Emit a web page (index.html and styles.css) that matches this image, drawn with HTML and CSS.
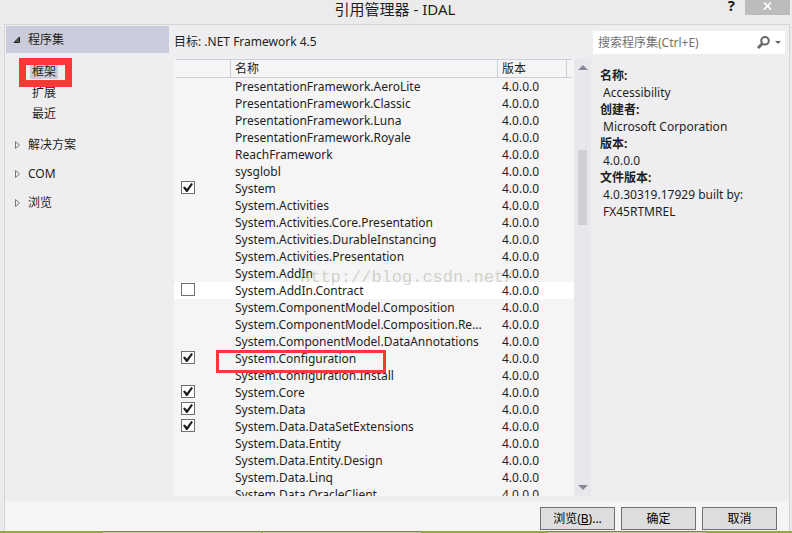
FILE: index.html
```html
<!DOCTYPE html>
<html lang="zh-CN">
<head>
    <meta charset="utf-8">
    <title>引用管理器 - IDAL</title>
    <link rel="stylesheet" href="styles.css">
</head>
<body>
    <div class="window">
        <header class="titlebar">
            <h1>引用管理器 - IDAL</h1>
            <div class="window-buttons">
                <button class="help" type="button">?</button>
                <button class="close" type="button" aria-label="关闭">
                    <svg width="9" height="8" viewBox="0 0 9 8"><path d="M1 0.5L8 7.5M8 0.5L1 7.5" stroke="#fff" stroke-width="1.7"/></svg>
                </button>
            </div>
        </header>

        <div class="dialog">
            <main class="content">
                <nav class="sidebar">
                    <a class="group active" href="#">
                        <svg width="8" height="8" viewBox="0 0 8 8"><path d="M6.5 1V6.5H1Z" fill="#555" stroke="#222"/></svg>
                        程序集
                    </a>
                    <div class="children">
                        <a class="selected marked" href="#"><span>框架</span></a>
                        <a href="#">扩展</a>
                        <a href="#">最近</a>
                    </div>
                    <a class="group" href="#">
                        <svg width="8" height="8" viewBox="0 0 8 8"><path d="M2.5 0.5V7.5L6.5 4Z" fill="none" stroke="#777"/></svg>
                        解决方案
                    </a>
                    <a class="group" href="#">
                        <svg width="8" height="8" viewBox="0 0 8 8"><path d="M2.5 0.5V7.5L6.5 4Z" fill="none" stroke="#777"/></svg>
                        COM
                    </a>
                    <a class="group" href="#">
                        <svg width="8" height="8" viewBox="0 0 8 8"><path d="M2.5 0.5V7.5L6.5 4Z" fill="none" stroke="#777"/></svg>
                        浏览
                    </a>
                </nav>

                <section class="assemblies">
                    <p class="target">目标: .NET Framework 4.5</p>
                    <div class="list">
                        <div class="list-view">
                            <table>
                                <colgroup>
                                    <col class="col-check">
                                    <col class="col-name">
                                    <col class="col-version">
                                    <col>
                                </colgroup>
                                <thead>
                                    <tr><th></th><th>名称</th><th>版本</th><th></th></tr>
                                </thead>
                                <tbody>
                                    <tr><td></td><td>PresentationFramework.AeroLite</td><td>4.0.0.0</td><td></td></tr>
                                    <tr><td></td><td>PresentationFramework.Classic</td><td>4.0.0.0</td><td></td></tr>
                                    <tr><td></td><td>PresentationFramework.Luna</td><td>4.0.0.0</td><td></td></tr>
                                    <tr><td></td><td>PresentationFramework.Royale</td><td>4.0.0.0</td><td></td></tr>
                                    <tr><td></td><td>ReachFramework</td><td>4.0.0.0</td><td></td></tr>
                                    <tr><td></td><td>sysglobl</td><td>4.0.0.0</td><td></td></tr>
                                    <tr><td><input type="checkbox" id="system" checked></td><td><label for="system">System</label></td><td>4.0.0.0</td><td></td></tr>
                                    <tr><td></td><td>System.Activities</td><td>4.0.0.0</td><td></td></tr>
                                    <tr><td></td><td>System.Activities.Core.Presentation</td><td>4.0.0.0</td><td></td></tr>
                                    <tr><td></td><td>System.Activities.DurableInstancing</td><td>4.0.0.0</td><td></td></tr>
                                    <tr><td></td><td>System.Activities.Presentation</td><td>4.0.0.0</td><td></td></tr>
                                    <tr><td></td><td>System.AddIn</td><td>4.0.0.0</td><td></td></tr>
                                    <tr class="hover"><td><input type="checkbox" id="contract"></td><td><label for="contract">System.AddIn.Contract</label></td><td>4.0.0.0</td><td></td></tr>
                                    <tr><td></td><td>System.ComponentModel.Composition</td><td>4.0.0.0</td><td></td></tr>
                                    <tr><td></td><td>System.ComponentModel.Composition.Re...</td><td>4.0.0.0</td><td></td></tr>
                                    <tr><td></td><td>System.ComponentModel.DataAnnotations</td><td>4.0.0.0</td><td></td></tr>
                                    <tr><td><input type="checkbox" id="configuration" checked></td><td class="marked"><label for="configuration">System.Configuration</label></td><td>4.0.0.0</td><td></td></tr>
                                    <tr><td></td><td>System.Configuration.Install</td><td>4.0.0.0</td><td></td></tr>
                                    <tr><td><input type="checkbox" id="core" checked></td><td><label for="core">System.Core</label></td><td>4.0.0.0</td><td></td></tr>
                                    <tr><td><input type="checkbox" id="data" checked></td><td><label for="data">System.Data</label></td><td>4.0.0.0</td><td></td></tr>
                                    <tr><td><input type="checkbox" id="extensions" checked></td><td><label for="extensions">System.Data.DataSetExtensions</label></td><td>4.0.0.0</td><td></td></tr>
                                    <tr><td></td><td>System.Data.Entity</td><td>4.0.0.0</td><td></td></tr>
                                    <tr><td></td><td>System.Data.Entity.Design</td><td>4.0.0.0</td><td></td></tr>
                                    <tr><td></td><td>System.Data.Linq</td><td>4.0.0.0</td><td></td></tr>
                                    <tr><td></td><td>System.Data.OracleClient</td><td>4.0.0.0</td><td></td></tr>
                                </tbody>
                            </table>
                            <span class="watermark">http://blog.csdn.net/</span>
                        </div>
                        <div class="scrollbar">
                            <svg width="10" height="5" viewBox="0 0 10 5"><path d="M0 5L5 0L10 5Z" fill="#868999"/></svg>
                            <div class="track"><div class="thumb"></div></div>
                            <svg width="10" height="5" viewBox="0 0 10 5"><path d="M0 0L5 5L10 0Z" fill="#868999"/></svg>
                        </div>
                    </div>
                </section>

                <aside class="details">
                    <div class="search">
                        <input type="text" placeholder="搜索程序集(Ctrl+E)" aria-label="搜索程序集">
                        <button type="button" aria-label="搜索">
                            <svg width="13" height="13" viewBox="0 0 13 13" fill="none" stroke="#666"><circle cx="8" cy="4.8" r="3.8" stroke-width="2"/><path d="M5.5 7.5L1 12" stroke-width="2.8"/></svg>
                        </button>
                        <button class="drop" type="button" aria-label="搜索选项">
                            <svg width="6" height="3" viewBox="0 0 6 3"><path d="M0 0H6L3 3Z" fill="#666"/></svg>
                        </button>
                    </div>
                    <dl>
                        <dt>名称:</dt>
                        <dd>Accessibility</dd>
                        <dt>创建者:</dt>
                        <dd>Microsoft Corporation</dd>
                        <dt>版本:</dt>
                        <dd>4.0.0.0</dd>
                        <dt>文件版本:</dt>
                        <dd>4.0.30319.17929 built by: FX45RTMREL</dd>
                    </dl>
                </aside>
            </main>

            <footer class="actions">
                <button type="button">浏览(<u>B</u>)...</button>
                <button type="button">确定</button>
                <button type="button">取消</button>
            </footer>
        </div>
        <div class="taskbar"><i></i><i></i><i></i></div>
    </div>
</body>
</html>
```
FILE: styles.css
```css
*, ::before, ::after {
    box-sizing: border-box;
}

body {
    margin: 0;
    font-family: "Noto Sans", "Noto Sans CJK SC", sans-serif;
    font-size: 12px;
    line-height: 17px;
    color: #1e1e1e;
}

button, input {
    font: inherit;
    color: inherit;
    margin: 0;
    padding: 0;
    border: none;
    background: none;
}

a {
    color: inherit;
    text-decoration: none;
}

.window {
    display: flex;
    flex-direction: column;
    height: 100vh;
    background-color: #ebebeb;
}

.titlebar {
    display: grid;
    grid-template-columns: 1fr auto 1fr;
    height: 24px;
    padding-right: 2px;
    flex: none;
}

.titlebar h1 {
    grid-column: 2;
    margin: 0;
    font-size: 15px;
    font-weight: normal;
    line-height: 18px;
}

.window-buttons {
    display: flex;
    justify-content: flex-end;
    gap: 10px;
    height: 15px;
}

.help {
    align-self: flex-start;
    font-size: 15px;
    font-weight: bold;
    line-height: 11px;
}

.close {
    display: flex;
    align-items: center;
    justify-content: center;
    width: 45px;
    padding-bottom: 3px;
    background-color: #bcbcbc;
}

.dialog {
    flex: 1;
    min-height: 0;
    display: flex;
    flex-direction: column;
    margin: 0 2px 0 4px;
    border: 1px solid #d5d5d5;
    border-bottom: none;
    background-color: #f5f5f5;
}

.content {
    flex: 1;
    min-height: 0;
    display: flex;
    padding: 1px 4px 5px 1px;
    background-color: #eeeef0;
}

/* left tree */
.sidebar {
    width: 163px;
    margin-right: 5px;
    flex: none;
}

.group {
    display: flex;
    align-items: center;
    gap: 7px;
    height: 29px;
    padding-left: 7px;
}

.group.active {
    height: 27px;
    background-color: #cbccdb;
}

.children {
    padding: 8px 0 6px 24px;
}

.children a {
    display: block;
    width: 28px;
    padding-left: 2px;
    line-height: 21px;
}

.children .selected {
    padding: 4px 0 3px;
}

.children .selected span {
    display: block;
    padding-left: 2px;
    background-color: #cbccdb;
    line-height: 14px;
}

.marked {
    position: relative;
}

.marked::after {
    content: "";
    position: absolute;
    border: 3px solid #fb3737;
    pointer-events: none;
}

.children .marked::after {
    left: -11px;
    top: -3px;
    width: 53px;
    height: 29px;
    border-width: 7px;
}

/* assembly list */
.assemblies {
    flex: 1;
    min-width: 0;
    display: flex;
    flex-direction: column;
}

.target {
    margin: 0;
    padding: 7px 0 9px;
}

.list {
    flex: 1;
    min-height: 0;
    display: flex;
}

.list-view {
    position: relative;
    flex: 1;
    min-width: 0;
    padding: 0 2px;
    overflow: hidden;
    background-color: #f5f5f5;
}

table {
    width: 100%;
    table-layout: fixed;
    border-collapse: separate;
    border-spacing: 0;
}

.col-check {
    width: 55px;
}

.col-version {
    width: 69px;
}

col:last-child {
    width: 5px;
}

th, td {
    height: 17px;
    padding: 0 4px;
    text-align: left;
    font-weight: normal;
    white-space: nowrap;
}

th {
    height: 19px;
    border: 1px solid #cccedb;
    border-width: 1px 1px 1px 0;
}

th:last-child {
    border-right: none;
}

td:nth-child(2) {
    overflow: hidden;
    text-overflow: ellipsis;
}

td.marked:nth-child(2) {
    overflow: visible;
}

td.marked::after {
    left: -15px;
    top: 0;
    width: 170px;
    height: 23px;
}

.hover {
    background-color: #fff;
    box-shadow: -2px 0 #fff, 2px 0 #fff;
}

input[type="checkbox"] {
    appearance: none;
    display: block;
    width: 14px;
    height: 13px;
    margin: 0 1px 2px;
    border: 1px solid #707070;
    background-color: #fff;
}

input[type="checkbox"]:checked::before {
    content: "";
    display: block;
    width: 10px;
    height: 9px;
    margin: 1px;
    background-color: #1e1e1e;
    clip-path: polygon(0 50%, 18% 38%, 40% 65%, 82% 0, 100% 12%, 45% 100%, 32% 100%);
}

.watermark {
    position: absolute;
    left: 126px;
    top: 210px;
    font-family: "Liberation Mono", monospace;
    font-size: 17px;
    color: rgba(150, 150, 130, 0.4);
}

.scrollbar {
    display: flex;
    flex-direction: column;
    align-items: center;
    width: 17px;
    padding: 6px 0;
    background-color: #e8e8ec;
}

.track {
    flex: 1;
    width: 9px;
}

.thumb {
    height: 75px;
    margin-top: 80px;
    background-color: #cfd0d5;
}

/* search and details */
.details {
    width: 194px;
    padding: 5px 0 0 2px;
    flex: none;
}

.search {
    display: flex;
    align-items: center;
    height: 23px;
    padding: 0 4px 0 5px;
    background-color: #fff;
}

.search input {
    flex: 1;
    min-width: 0;
    outline: none;
}

.search input::placeholder {
    color: #717171;
}

.search button {
    display: flex;
    align-items: center;
    justify-content: center;
}

.search .drop {
    width: 11px;
    padding-left: 5px;
}

dl {
    margin: 13px 0 0 7px;
}

dt {
    font-weight: bold;
}

dd {
    margin: 0 20px 0 3px;
}

/* bottom buttons */
.actions {
    display: flex;
    justify-content: flex-end;
    gap: 6px;
    padding: 6px 12px 1px;
}

.actions button {
    width: 75px;
    height: 23px;
    border: 1px solid #707070;
    background-color: #ddd;
    color: #000;
}

.taskbar {
    display: flex;
    gap: 2px;
    height: 2px;
    padding-left: 103px;
    background-color: #95a541;
}

.taskbar i {
    width: 158px;
    border-top: 1px solid #7b8153;
    background-color: #c5c99a;
}

.taskbar i:last-child {
    margin-left: 125px;
}
```
